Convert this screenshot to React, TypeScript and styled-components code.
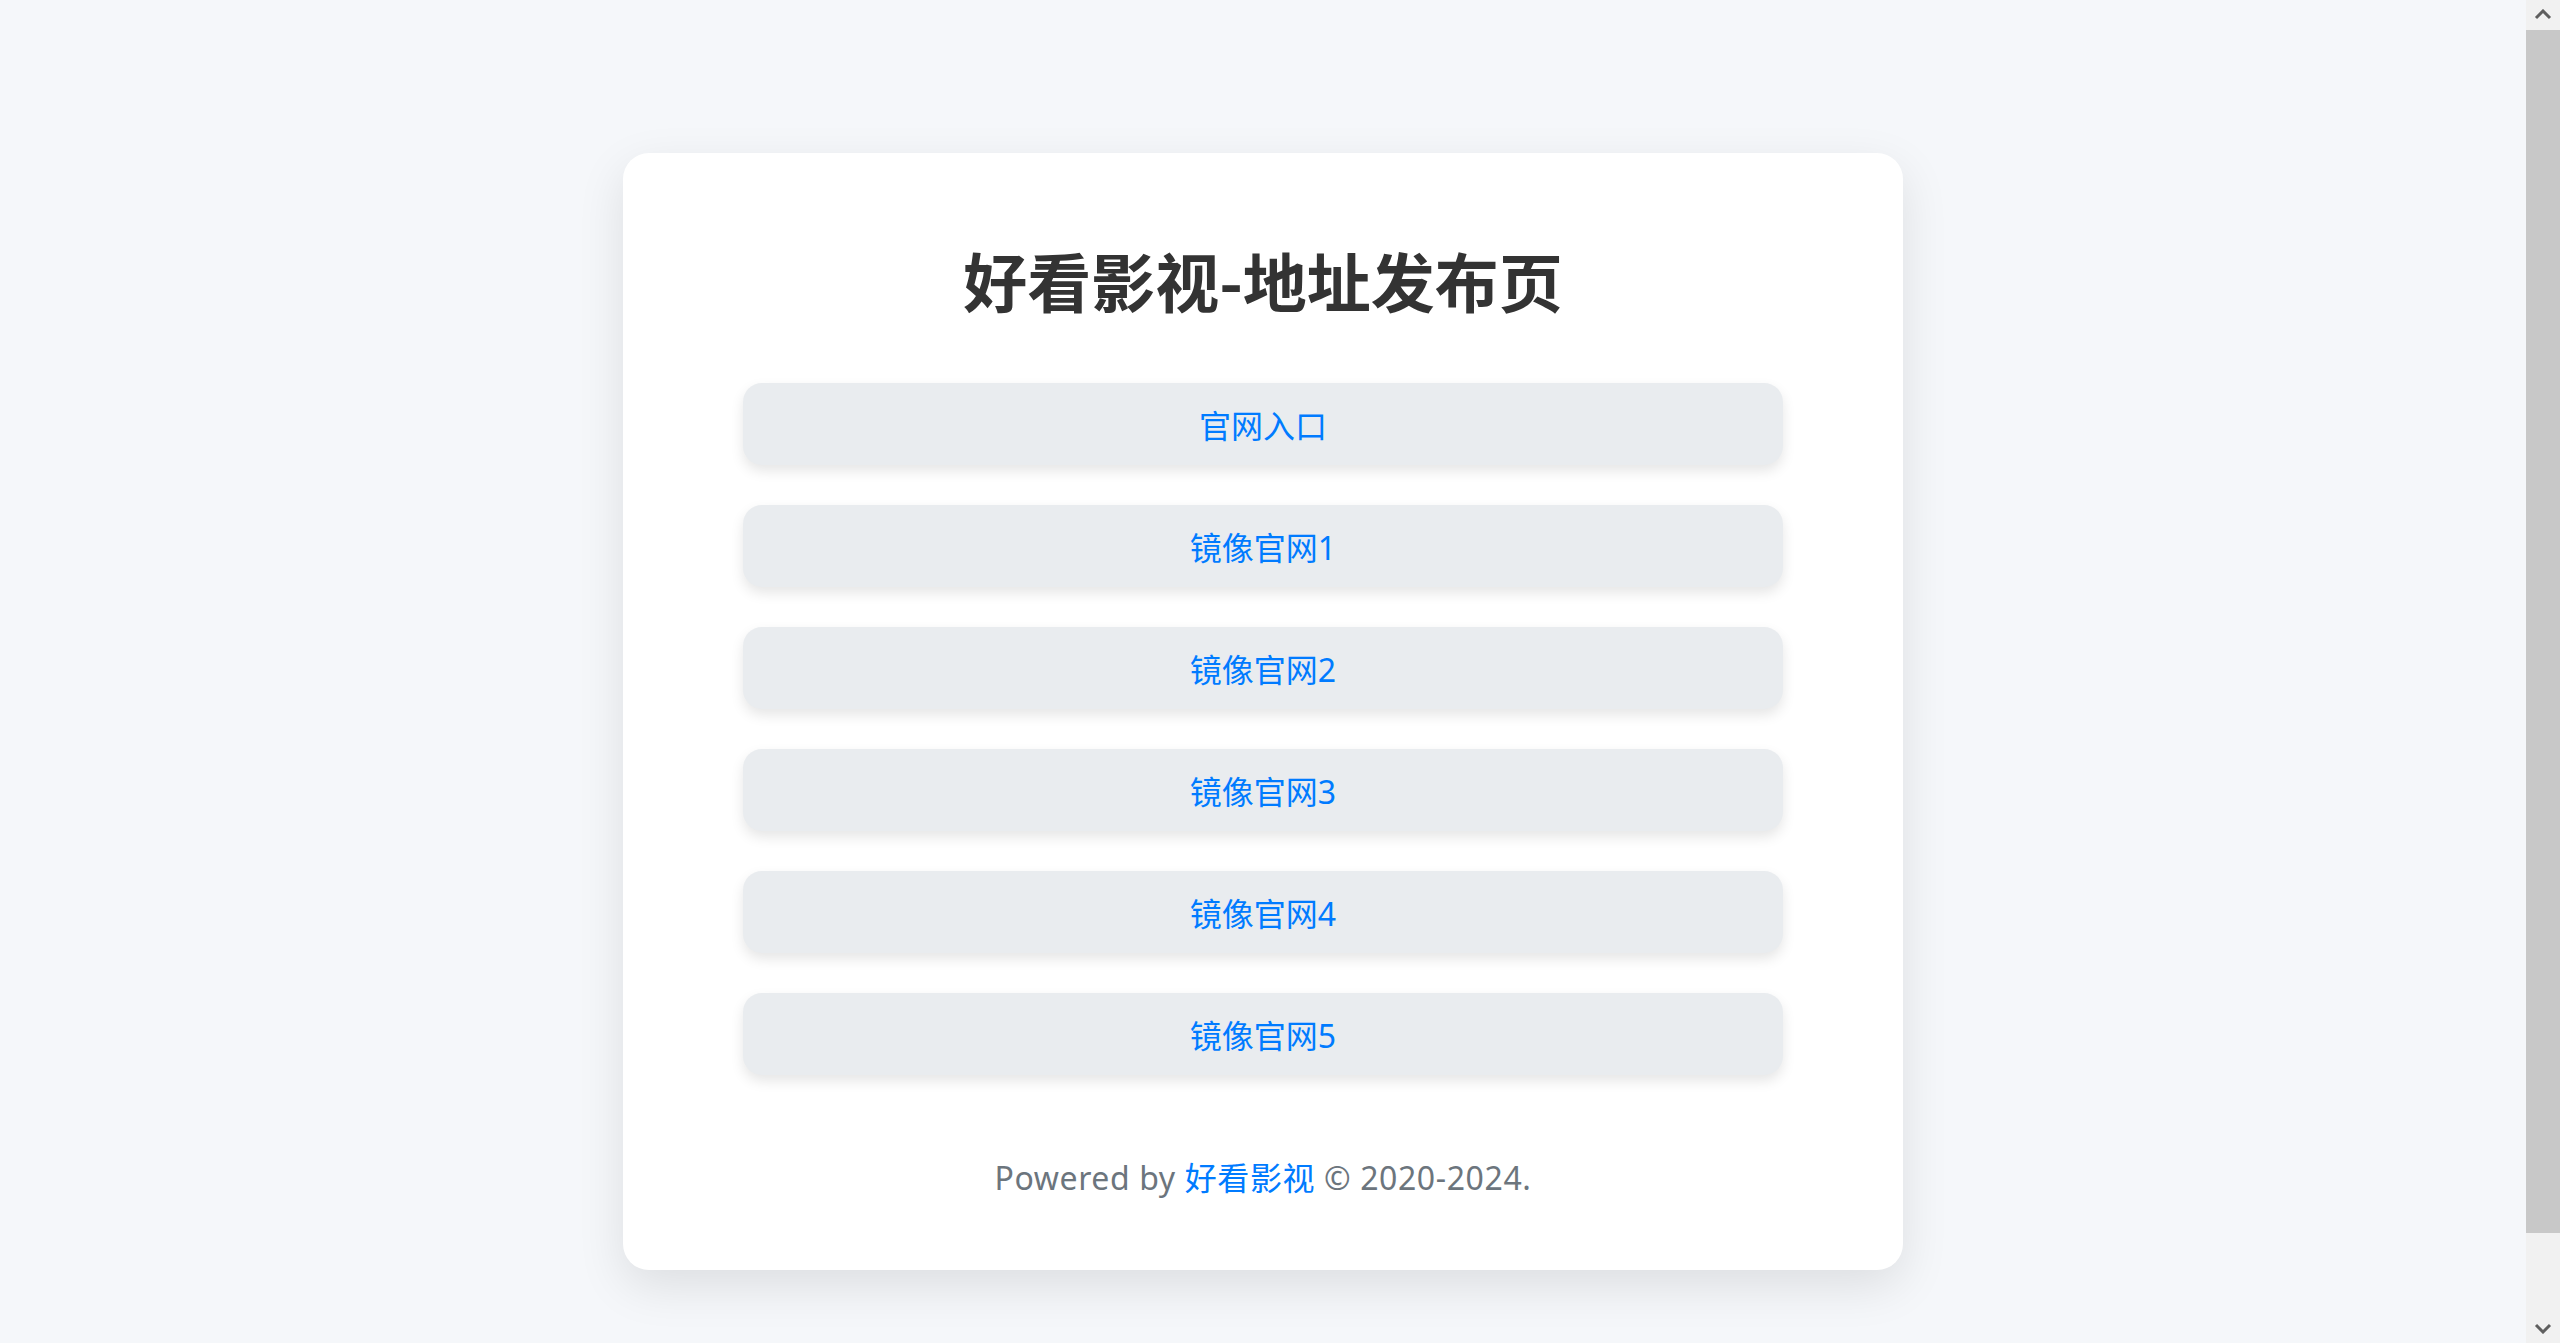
import React from "react";
import styled, { createGlobalStyle } from "styled-components";

const GlobalStyle = createGlobalStyle`
  html, body {
    margin: 0;
    padding: 0;
    background: #f5f7fa;
  }
  body {
    font-family: "Noto Sans", "Microsoft YaHei", "Noto Sans CJK SC", sans-serif;
  }
`;

const Page = styled.main`
  box-sizing: border-box;
  padding: 153px 34px 163px 0;
  display: flex;
  justify-content: center;
`;

const Card = styled.section`
  box-sizing: border-box;
  width: 1280px;
  background: #ffffff;
  border-radius: 26px;
  box-shadow: 0 16px 48px rgba(0, 0, 0, 0.1);
  padding: 88px 120px 68px;
  display: flex;
  flex-direction: column;
  align-items: stretch;
`;

const Title = styled.h1`
  margin: 0 0 65px;
  font-family: "Noto Sans CJK SC", sans-serif;
  font-size: 64px;
  line-height: 77px;
  font-weight: 700;
  color: #333333;
  text-align: center;
`;

const LinkList = styled.nav`
  display: flex;
  flex-direction: column;
  gap: 40px;
`;

const LinkButton = styled.a`
  display: flex;
  align-items: center;
  justify-content: center;
  height: 82px;
  border-radius: 19px;
  background: #e9ecef;
  box-shadow: 0 6px 13px rgba(0, 0, 0, 0.1);
  color: #007bff;
  font-size: 32px;
  text-decoration: none;
`;

const Footer = styled.footer`
  margin-top: 79px;
  font-size: 32px;
  line-height: 48px;
  letter-spacing: 0.6px;
  color: #6c757d;
  text-align: center;
`;

const FooterLink = styled.a`
  color: #007bff;
  text-decoration: none;
`;

/* Classic browser scrollbar seen at the right edge of the screenshot */
const ScrollBar = styled.div`
  position: fixed;
  top: 0;
  right: 0;
  width: 34px;
  height: 100vh;
  background: #f1f1f1;
  display: flex;
  flex-direction: column;
`;

const ScrollArrow = styled.div`
  height: 30px;
  flex: 0 0 30px;
  display: flex;
  align-items: center;
  justify-content: center;
  color: #5f5f5f;
`;

const ScrollTrack = styled.div`
  flex: 1;
  display: flex;
  flex-direction: column;
`;

const ScrollThumb = styled.div`
  height: 93.75%;
  background: #c8c8c8;
`;

const Chevron = ({ down }: { down?: boolean }) => (
  <svg width="18" height="12" viewBox="0 0 18 12" aria-hidden="true">
    <polyline
      points={down ? "2,3 9,10 16,3" : "2,9 9,2 16,9"}
      fill="none"
      stroke="currentColor"
      strokeWidth="3"
    />
  </svg>
);

const links = ["官网入口", "镜像官网1", "镜像官网2", "镜像官网3", "镜像官网4", "镜像官网5"];

export default function App() {
  return (
    <>
      <GlobalStyle />
      <Page>
        <Card>
          <Title>好看影视-地址发布页</Title>
          <LinkList>
            {links.map((label) => (
              <LinkButton key={label} href="#">
                {label}
              </LinkButton>
            ))}
          </LinkList>
          <Footer>
            Powered by <FooterLink href="#">好看影视</FooterLink> © 2020-2024.
          </Footer>
        </Card>
      </Page>
      <ScrollBar aria-hidden="true">
        <ScrollArrow>
          <Chevron />
        </ScrollArrow>
        <ScrollTrack>
          <ScrollThumb />
        </ScrollTrack>
        <ScrollArrow>
          <Chevron down />
        </ScrollArrow>
      </ScrollBar>
    </>
  );
}
